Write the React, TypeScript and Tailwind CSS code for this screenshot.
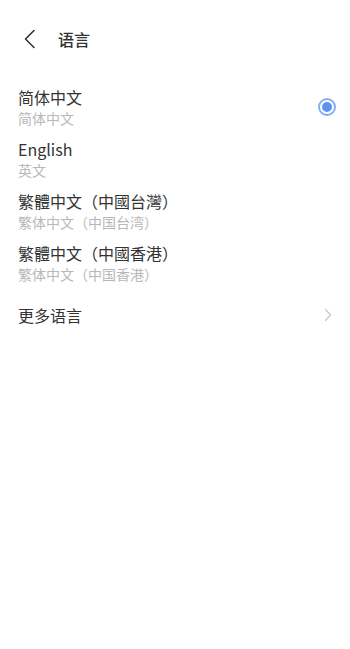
import * as React from "react";

type Lang = { id: string; name: string; sub: string };

const langs: Lang[] = [
  { id: "zh-CN", name: "简体中文", sub: "简体中文" },
  { id: "en", name: "English", sub: "英文" },
  { id: "zh-TW", name: "繁體中文（中國台灣）", sub: "繁体中文（中国台湾）" },
  { id: "zh-HK", name: "繁體中文（中國香港）", sub: "繁体中文（中国香港）" },
];

export default function App() {
  const [selected, setSelected] = React.useState("zh-CN");

  return (
    <div
      className="min-h-[649px] w-full bg-white text-[#333333]"
      style={{ fontFamily: '"Noto Sans CJK SC", "Noto Sans", sans-serif' }}
    >
      {/* header */}
      <div className="flex h-[78px] items-center pl-[23px]">
        <svg width="14" height="20" viewBox="0 0 14 20" fill="none" className="-mt-[1px]">
          <path d="M11 1.5 L2.5 10 L11 18.5" stroke="#333333" strokeWidth="1.6" strokeLinecap="round" strokeLinejoin="round" />
        </svg>
        <span className="ml-[21px] text-[16px] font-medium leading-none">语言</span>
      </div>

      <div className="pt-[3px]">
        {langs.map((l) => (
          <div
            key={l.id}
            onClick={() => setSelected(l.id)}
            className="flex items-center justify-between py-[5px] pl-[18px] pr-[14px]"
          >
            <div className="flex flex-col">
              <span className="text-[16px] leading-[22px] text-[#333333]">{l.name}</span>
              <span className="text-[14px] leading-[20px] text-[#b8b8b8]">{l.sub}</span>
            </div>
            {selected === l.id && (
              <span className="flex h-[18px] w-[18px] items-center justify-center rounded-full border-2 border-[#86aef3]">
                <span className="h-[10px] w-[10px] rounded-full bg-[#5b93f1]" />
              </span>
            )}
          </div>
        ))}

        <div className="flex h-[52px] items-center justify-between pl-[18px] pr-[18px]">
          <span className="text-[16px] leading-[22px] text-[#333333]">更多语言</span>
          <svg width="8" height="14" viewBox="0 0 8 14" fill="none">
            <path d="M1.5 1.5 L6.5 7 L1.5 12.5" stroke="#c8c8c8" strokeWidth="1.3" strokeLinecap="round" strokeLinejoin="round" />
          </svg>
        </div>
      </div>
    </div>
  );
}
